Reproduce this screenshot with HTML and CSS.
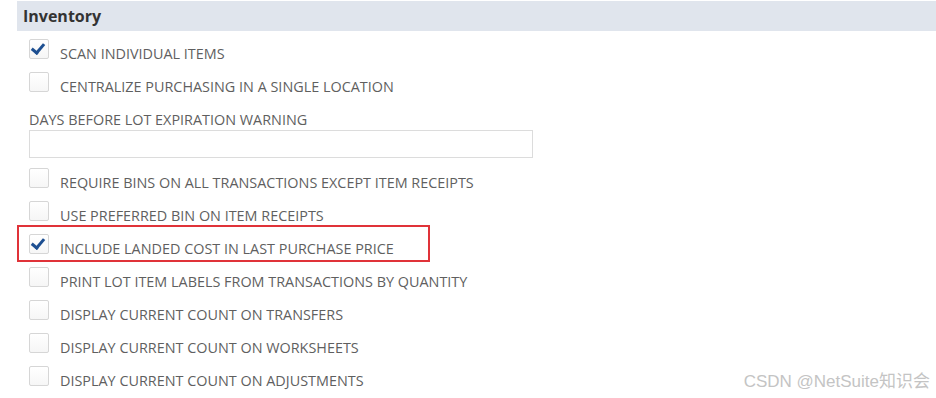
FILE: index.html
```html
<!DOCTYPE html>
<html lang="en">
<head>
  <meta charset="UTF-8" />
  <title>Inventory</title>
  <link rel="stylesheet" href="styles.css">
</head>
<body>

<div class="section-head">Inventory</div>

<div class="fields">
  <label class="row">
    <span class="box checked"></span>
    <span class="text">SCAN INDIVIDUAL ITEMS</span>
  </label>
  <label class="row">
    <span class="box"></span>
    <span class="text">CENTRALIZE PURCHASING IN A SINGLE LOCATION</span>
  </label>

  <div class="field">
    <div class="field-label">DAYS BEFORE LOT EXPIRATION WARNING</div>
    <div class="input"></div>
  </div>

  <label class="row">
    <span class="box"></span>
    <span class="text">REQUIRE BINS ON ALL TRANSACTIONS EXCEPT ITEM RECEIPTS</span>
  </label>
  <label class="row">
    <span class="box"></span>
    <span class="text">USE PREFERRED BIN ON ITEM RECEIPTS</span>
  </label>
  <label class="row highlight">
    <span class="box checked"></span>
    <span class="text">INCLUDE LANDED COST IN LAST PURCHASE PRICE</span>
  </label>
  <label class="row">
    <span class="box"></span>
    <span class="text">PRINT LOT ITEM LABELS FROM TRANSACTIONS BY QUANTITY</span>
  </label>
  <label class="row">
    <span class="box"></span>
    <span class="text">DISPLAY CURRENT COUNT ON TRANSFERS</span>
  </label>
  <label class="row">
    <span class="box"></span>
    <span class="text">DISPLAY CURRENT COUNT ON WORKSHEETS</span>
  </label>
  <label class="row">
    <span class="box"></span>
    <span class="text">DISPLAY CURRENT COUNT ON ADJUSTMENTS</span>
  </label>
</div>

<div class="watermark">CSDN @NetSuite知识会</div>

</body>
</html>
```

FILE: styles.css
```css
body {
  margin: 0;
  font-family: 'Open Sans', sans-serif;
  background: #fff;
  color: #5f5f5f;
  position: relative;
  height: 398px;
  overflow: hidden;
}
.section-head {
  margin: 1px 0 0 17px;
  height: 30px;
  line-height: 30px;
  padding-left: 6px;
  background: #e0e5ed;
  color: #333;
  font-size: 16px;
  font-weight: bold;
}
.fields {
  padding: 8px 0 0 29px;
}
.row {
  display: flex;
  align-items: flex-start;
  height: 33px;
  position: relative;
}
.box {
  width: 18px;
  height: 18px;
  border: 1px solid #d6d6d6;
  border-radius: 2px;
  background: linear-gradient(#fff, #f6f6f6);
  position: relative;
}
.box.checked::after {
  content: '';
  position: absolute;
  left: 4px;
  top: 1px;
  width: 5px;
  height: 10px;
  border-right: 3px solid #1d4f91;
  border-bottom: 3px solid #1d4f91;
  transform: rotate(40deg);
}
.text {
  margin: 5px 0 0 11px;
  font-size: 14.4px;
  line-height: 20px;
}
.highlight::before {
  content: '';
  position: absolute;
  left: -12px;
  top: -9px;
  width: 409px;
  height: 33px;
  border: 2px solid #e03339;
}
.field {
  height: 63px;
}
.field-label {
  font-size: 14.4px;
  line-height: 20px;
  padding-top: 5px;
}
.input {
  width: 502px;
  height: 26px;
  border: 1px solid #dcdcdc;
}
.watermark {
  position: absolute;
  right: 6px;
  bottom: 6px;
  font-family: 'Liberation Sans', 'Noto Sans CJK SC', sans-serif;
  font-size: 17px;
  color: #c4c4c4;
}
```
